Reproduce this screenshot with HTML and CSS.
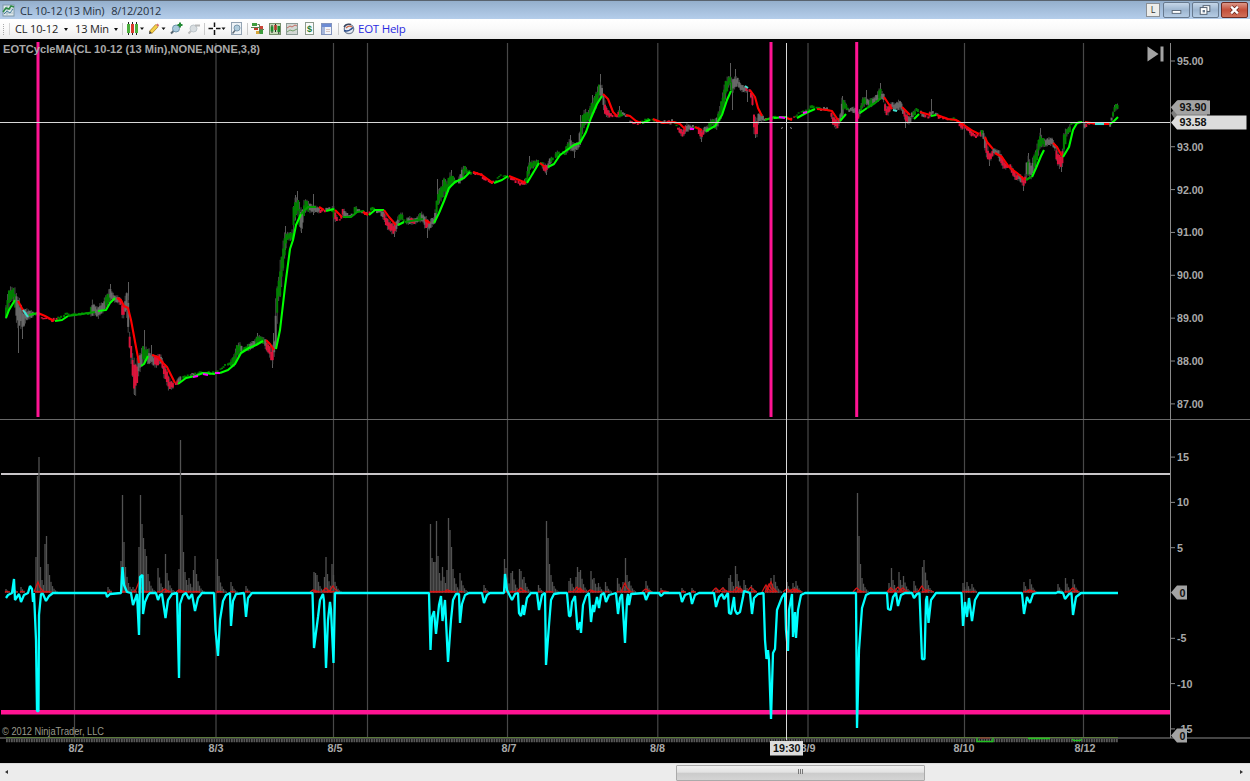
FILE: index.html
```html
<!DOCTYPE html>
<html lang="en">
<head>
    <meta charset="UTF-8">
    <title>CL 10-12 (13 Min) 8/12/2012</title>
    <link rel="stylesheet" href="styles.css">
</head>
<body>

<div class="titlebar">
    <svg class="app-icon" width="13" height="13" viewBox="0 0 13 13">
        <rect x="1" y="1" width="11" height="11" fill="#dfe9ec" stroke="#7f98a8"/>
        <path d="M1 5h11M1 9h11M5 1v11" stroke="#a8bcc4" fill="none"/>
        <path d="M1 8l3-4 3 1 2-3 3 1" stroke="#2d8a43" stroke-width="1.6" fill="none"/>
        <path d="M2 10l3-3 3 2 3-4" stroke="#487f9c" fill="none"/>
    </svg>
    <span class="caption">CL 10-12 (13 Min)</span>
    <span class="caption date">8/12/2012</span>
    <div class="window-buttons">
        <span class="link-btn">L</span>
        <span class="win-btn"><svg width="26" height="14" viewBox="0 0 26 14"><rect x="8.5" y="7.5" width="9" height="3" fill="#fff" stroke="#5a6878"/></svg></span>
        <span class="win-btn"><svg width="26" height="14" viewBox="0 0 26 14"><rect x="10.5" y="2.5" width="7" height="6" fill="#fff" stroke="#4f5c6c"/><rect x="7.5" y="4.5" width="7" height="7" fill="#fff" stroke="#4f5c6c"/><rect x="10" y="7" width="2.5" height="2.5" fill="#66798e"/></svg></span>
        <span class="win-btn close"><svg width="26" height="14" viewBox="0 0 26 14"><path d="M9.5 3.5l7 7M16.5 3.5l-7 7" stroke="#6b2a22" stroke-width="4"/><path d="M9.5 3.5l7 7M16.5 3.5l-7 7" stroke="#fff" stroke-width="2.4"/></svg></span>
    </div>
</div>

<div class="toolbar">
    <span class="grip"></span>
    <span class="sep"></span>
    <span class="tool-text instrument">CL 10-12</span><span class="caret"></span>
    <span class="tool-text interval">13 Min</span><span class="caret"></span>
    <svg class="tools" width="225" height="18" viewBox="120 20 225 18">
        <path d="M122.5 23v12M204.5 23v12M247.5 23v12M338.5 23v12" stroke="#c9c9c9"/>
        <path d="M128.5 22v13M132.5 22v13M136.5 22v13" stroke="#222"/>
        <rect x="127" y="24" width="3" height="9" fill="#4cae3c"/>
        <rect x="131" y="24" width="3" height="9" fill="#d93a2c"/>
        <rect x="135" y="24" width="3" height="9" fill="#4cae3c"/>
        <path d="M140 27.5h4l-2 2.5zM161.5 27.5h4l-2 2.5zM221.5 27.5h4l-2 2.5z" fill="#111"/>
        <path d="M150.5 32.5l6.5-7" stroke="#a87c1c" stroke-width="4"/>
        <path d="M151 32l6.500-7" stroke="#f3d04a" stroke-width="2.6"/>
        <path d="M149 34l.5-3 2.3 2.3z" fill="#333"/>
        <path d="M156.8 24.3l1.7 1.7" stroke="#d46f78" stroke-width="2"/>
        <path d="M171 33.5l4-4" stroke="#55646f" stroke-width="2"/>
        <circle cx="176" cy="28.5" r="3.5" fill="#a9c9dc" stroke="#7194ab"/>
        <path d="M180 22.5v5M177.5 25h5" stroke="#238a35" stroke-width="2"/>
        <path d="M188.5 33.5l4-4" stroke="#bbb" stroke-width="2"/>
        <circle cx="193.5" cy="28.5" r="3.5" fill="#d8dde0" stroke="#bcc5ca"/>
        <path d="M195 25.5h5" stroke="#b9b9b9" stroke-width="2"/>
        <path d="M214.5 22.5v4.5M214.5 30v5M208.5 28.5h4.5M216 28.5h4.5" stroke="#111" stroke-width="1.5"/>
        <rect x="231.5" y="22.5" width="10" height="12" fill="#edf2f6" stroke="#93a3b3"/>
        <circle cx="237" cy="28" r="3" fill="#afcbdc" stroke="#7b98ac"/>
        <path d="M232.5 33.5l2.5-3" stroke="#606d78" stroke-width="1.5"/>
        <rect x="252" y="23" width="5" height="3" fill="#3d9c3d"/>
        <rect x="254" y="28" width="4" height="2" fill="#c0392b"/>
        <rect x="256" y="31" width="5" height="3" fill="#d6a53b"/>
        <rect x="260" y="26" width="3" height="3" fill="#c74436"/>
        <rect x="260" y="30" width="3" height="4" fill="#3d9c3d"/>
        <path d="M251 27.5h8M257.5 24.500h2v9M259 29.5h5" stroke="#5f7d54" fill="none"/>
        <rect x="269.5" y="23.5" width="11" height="11" fill="#c7dab8" stroke="#78906e"/>
        <path d="M272 25v8M275.5 24v8M278.8 26v8" stroke="#222" stroke-width="1"/>
        <path d="M272 26.5v5M278.8 26v6" stroke="#1f8a2b" stroke-width="2.6"/>
        <path d="M275.5 25v5" stroke="#b3362b" stroke-width="2.6"/>
        <rect x="286.5" y="23.5" width="11" height="11" fill="#d3d7d4" stroke="#8c9a96"/>
        <path d="M287 28l3-2 2 1 3-2 2 1" stroke="#c46b62" fill="none"/>
        <path d="M287 32l3-2 3 1 4-2" stroke="#74a06c" fill="none"/>
        <rect x="305.5" y="22.5" width="8" height="12" fill="#fafafa" stroke="#8d9a8d"/>
        <text x="307" y="32" class="dollar">$</text>
        <rect x="321.5" y="23.5" width="10" height="11" fill="#f2f4fa" stroke="#8394bd"/>
        <rect x="322" y="24" width="9" height="3" fill="#6c8bd4"/>
        <rect x="322" y="27" width="3" height="7" fill="#a5b6da"/>
        <path d="M326 29.5h4M326 31.5h4" stroke="#d8c5c0"/>
    </svg>
    <svg class="eot-icon" width="12" height="12" viewBox="0 0 12 12">
        <circle cx="6" cy="6" r="4.700" fill="#e7ecf5" stroke="#7a859a" stroke-width="1.3"/>
        <path d="M1 4q2-4 7-2.500" stroke="#38445c" stroke-width="1.400" fill="none"/>
        <path d="M1 7.5q4 2 9-3" stroke="#2f4f8c" stroke-width="1.4" fill="none"/>
        <path d="M3 5q3-3 6-1" stroke="#d06a48" stroke-width="1.2" fill="none"/>
    </svg>
    <a class="help">EOT Help</a>
</div>

<svg id="chart" class="chart" width="1250" height="724" viewBox="0 39 1250 724"></svg>

<div class="scrollbar">
    <span class="arrow left"></span>
    <div class="track"><div class="thumb"><i></i><i></i><i></i></div></div>
    <span class="arrow right"></span>
</div>

<script src="chart.js"></script>
</body>
</html>
```
FILE: styles.css
```css
body {
    margin: 0;
    width: 1250px;
    height: 781px;
    overflow: hidden;
    background-color: #000;
    font-family: "Open Sans", "Noto Sans", sans-serif;
    display: flex;
    flex-direction: column;
}

.titlebar {
    height: 19px;
    box-sizing: border-box;
    border-top: 1px solid #59636e;
    background: linear-gradient(#94afcc, #a5bfdc 50%, #b4cdea);
    display: flex;
    align-items: center;
    flex-shrink: 0;
}

.app-icon {
    margin: 0 5px 0 2px;
}

.caption {
    font-size: 11px;
    letter-spacing: -0.25px;
    line-height: 17px;
    color: #26323f;
    white-space: pre;
}

.date {
    margin-left: 7px;
}

.window-buttons {
    margin-left: auto;
    display: flex;
    align-items: center;
    gap: 2px;
    padding-right: 2px;
}

.link-btn {
    width: 12px;
    height: 12px;
    border: 1px solid #8a8f94;
    background-color: #ededea;
    font-size: 9px;
    line-height: 12px;
    text-align: center;
    color: #333;
    margin-right: 1px;
}

.win-btn {
    width: 25px;
    height: 14px;
    border: 1px solid #67798e;
    border-radius: 2px;
    background: linear-gradient(#c5d6e8, #9db5cf 50%, #b5cce4);
    display: flex;
    overflow: hidden;
}

.close {
    border-color: #6b2a22;
    background: linear-gradient(#dc9788, #c44f3a 50%, #d0705a);
}

.toolbar {
    height: 20px;
    box-sizing: border-box;
    background: linear-gradient(#fff, #fafafa 45%, #ebebeb);
    display: flex;
    align-items: center;
    flex-shrink: 0;
}

.grip {
    width: 1px;
    height: 11px;
    margin-left: 3px;
    border-left: 1px dotted #aaa;
}

.sep {
    width: 1px;
    height: 12px;
    margin: 0 5px 0 4px;
    background-color: #d5d5d5;
}

.tool-text {
    font-size: 11px;
    letter-spacing: -0.15px;
    line-height: 18px;
    padding-bottom: 1px;
    color: #222;
    white-space: nowrap;
}

.instrument {
    width: 49px;
}

.interval {
    width: 39px;
}

.caret {
    border: 2px solid transparent;
    border-top: 3px solid #111;
    border-bottom: none;
    margin-right: 7px;
}

.interval + .caret {
    margin-right: 2px;
}

.eot-icon {
    margin-left: -2px;
}

.help {
    margin-left: 3px;
    padding-bottom: 2px;
    font-size: 11.5px;
    letter-spacing: -0.25px;
    color: #2a2ae0;
}

.dollar {
    font: bold 9px "Liberation Sans", sans-serif;
    fill: #1f7a2b;
}

.chart {
    display: block;
    flex-shrink: 0;
    background-color: #000;
}

.axis-label {
    font: bold 11.5px "Liberation Sans", Arial, sans-serif;
    fill: #a9a9a9;
}

.tag-label {
    font: bold 11.5px "Liberation Sans", Arial, sans-serif;
    fill: #111;
}

.indicator-label {
    font: bold 11.5px "Liberation Sans", Arial, sans-serif;
    fill: #a9a9a9;
}

.copyright {
    font: 10px "Liberation Sans", Arial, sans-serif;
    fill: #9a9a8c;
}

.scrollbar {
    height: 18px;
    box-sizing: border-box;
    background-color: #ececec;
    border-top: 1px solid #dcdcdc;
    display: flex;
    align-items: center;
    flex-shrink: 0;
}

.track {
    flex: 1;
    padding-left: 661px;
}

.thumb {
    width: 247px;
    height: 14px;
    border: 1px solid #aaa;
    border-radius: 1px;
    background: linear-gradient(#f0f0f0, #e2e2e2 45%, #cbcbcb 50%, #d4d4d4);
    display: flex;
    align-items: center;
    justify-content: center;
    gap: 1px;
}

.thumb i {
    width: 1px;
    height: 5px;
    margin-bottom: 2px;
    background-color: #777;
}

.arrow {
    width: 0;
    margin-bottom: 2px;
    border: 2px solid transparent;
}

.left {
    border-right: 3px solid #333;
    border-left: none;
    margin-left: 5px;
    margin-right: 7px;
}

.right {
    border-left: 3px solid #333;
    border-right: none;
    margin-right: 7px;
}
```
FILE: chart.js
```js
const chart = document.getElementById('chart');

const GREEN = '#008000';
const RED = '#dc143c';
const GRAY = '#696969';
const colors = { g: GREEN, r: RED, d: GRAY };

// price range: x, top, bottom, trend colour
const price = `6 306 318 g,8 293 312 g,10 288 302 g,14 288 299 g,15 290 308 d,17 296 325 d,21 305 326 d,23 312 330 d,25 309 322 d,28 310 319 d,31 311 318 d,34 312 316 g,38 312 315 g,40 317 319 r,50 318 320 r,53 318 323 r,57 317 320 g,60 316 319 g,63 314 318 g,67 312 315 g,70 313 316 g,90 312 315 g,92 301 316 d,95 306 314 d,98 308 318 d,100 304 315 d,103 303 312 d,105 297 308 g,108 293 305 g,110 288 300 d,112 292 300 d,115 296 302 d,118 296 303 r,121 299 305 r,122 304 317 r,124 305 317 d,126 293 308 d,128 292 328 d,129 328 342 r,131 345 360 r,133 358 380 r,134 360 392 r,136 365 392 r,138 358 376 d,141 352 368 d,143 346 363 g,146 348 360 g,149 350 364 d,151 355 362 d,154 356 366 r,157 356 367 r,160 354 362 d,162 357 366 r,164 366 377 r,166 366 380 r,168 375 389 r,170 380 389 r,175 384 388 r,178 378 384 d,181 376 381 g,185 375 379 g,190 374 376 d,195 372 375 g,200 371 374 g,210 371 375 g,215 371 374 g,220 369 371 g,225 364 367 g,230 362 366 g,234 355 366 g,237 345 358 g,240 343 353 d,242 347 352 g,246 346 351 g,250 343 350 d,255 340 346 g,257 336 345 g,260 336 342 g,264 338 344 d,266 340 350 r,269 344 354 r,271 350 360 r,273 345 363 d,275 338 350 d,276 290 348 g,278 285 300 g,280 265 298 g,282 255 280 g,284 235 262 g,287 233 240 g,292 232 240 g,293 215 238 g,294 200 225 g,296 199 215 g,298 200 214 g,300 206 230 d,302 212 230 d,304 202 216 g,306 199 210 g,309 203 212 d,312 205 212 d,315 206 212 d,320 208 213 r,323 209 213 r,326 208 212 d,330 206 209 g,333 207 213 g,334 207 221 r,336 215 221 r,340 219 221 r,343 208 216 d,346 212 218 d,350 215 217 d,353 212 216 g,355 206 214 g,357 207 212 d,360 210 213 d,365 211 215 r,368 212 216 r,370 209 214 g,373 205 210 g,376 209 213 d,380 209 214 d,384 212 220 r,387 218 228 r,390 222 231 r,393 224 234 r,396 222 232 d,399 215 222 g,402 212 219 g,404 220 224 g,407 218 224 d,410 217 224 r,415 219 224 d,418 216 222 g,421 212 221 d,423 214 222 d,425 217 228 r,427 218 228 r,429 222 230 d,432 218 226 d,434 218 224 d,436 205 222 g,438 191 205 g,441 187 200 g,444 178 195 g,447 182 192 g,450 174 188 g,452 174 184 g,454 178 184 g,457 180 184 d,460 176 183 d,462 168 180 g,465 166 173 g,468 170 174 g,472 170 175 d,475 172 175 r,480 172 176 r,485 177 182 r,490 180 184 r,495 181 184 g,500 174 176 g,505 175 177 g,510 176 180 r,513 177 181 r,518 180 185 r,522 182 186 r,526 178 184 g,528 165 181 g,530 162 169 g,533 161 168 g,538 160 165 g,541 161 165 g,543 163 169 r,545 164 173 r,547 165 171 d,550 158 165 g,553 156 160 g,557 151 157 g,560 152 156 g,565 150 155 g,567 144 153 g,570 139 149 d,572 143 151 d,575 143 151 d,578 143 149 d,580 130 145 g,583 113 130 g,585 110 125 g,588 113 122 g,591 104 116 g,594 98 112 g,597 90 105 g,600 82 96 d,602 86 97 d,604 98 112 r,606 106 116 r,608 110 117 r,612 114 118 r,616 115 118 r,619 110 117 g,622 111 116 d,626 114 117 d,628 115 118 d,631 121 124 r,638 122 125 r,642 120 122 g,645 118 121 g,650 118 121 g,655 119 122 r,660 121 124 d,665 120 124 r,670 120 125 d,674 118 122 g,677 126 128 r,680 128 134 r,683 131 137 r,686 124 132 d,690 125 130 d,694 125 129 g,698 127 131 r,700 128 138 r,702 132 138 r,704 127 133 d,708 126 132 g,710 120 128 g,713 119 124 g,716 120 130 d,718 113 126 g,720 107 120 g,723 93 112 g,725 82 100 g,728 77 88 g,730 76 84 g,732 80 93 d,735 77 88 d,738 78 85 d,740 83 90 d,743 86 92 d,746 86 92 r,749 88 92 r,751 92 98 r,753 95 108 r,754 115 132 r,756 120 136 r,757 119 136 r,758 114 124 d,760 112 121 d,765 118 121 r,768 118 120 g,772 117 120 g,776 115 119 g,780 116 118 g,786 116 119 g,790 118 121 r,795 116 118 g,800 111 113 g,805 110 113 g,808 108 112 g,812 104 109 g,815 105 108 g,820 107 111 d,825 106 111 d,828 108 111 g,831 112 116 r,833 115 125 r,835 118 127 r,837 120 129 r,840 117 123 d,842 99 117 g,845 101 108 g,848 108 112 d,852 107 112 d,856 108 114 d,857 113 120 r,859 112 118 d,861 105 112 g,863 97 107 g,866 98 104 d,869 100 106 g,872 98 106 d,875 97 102 d,878 92 102 g,880 87 98 g,882 92 99 d,884 94 102 d,885 103 112 r,887 108 116 r,889 105 113 r,892 102 108 d,895 104 110 d,898 101 110 d,901 101 109 d,903 108 114 r,905 112 120 r,908 115 124 d,910 118 123 d,912 112 118 g,915 110 115 g,917 107 112 g,920 110 115 d,925 114 119 r,928 117 120 r,930 111 117 d,935 111 114 d,938 114 119 r,942 116 119 r,950 118 121 g,955 117 121 g,958 120 123 r,961 123 129 r,965 126 130 r,968 127 131 r,971 130 136 r,975 134 138 r,979 134 138 r,981 130 136 g,983 130 136 d,985 137 150 r,987 145 158 r,990 155 162 r,993 148 155 d,995 149 154 d,998 150 156 d,1000 152 162 r,1003 158 168 r,1006 164 169 r,1010 164 169 r,1014 170 178 r,1016 174 180 r,1019 174 180 d,1022 176 184 r,1024 180 187 r,1026 171 181 d,1027 158 176 g,1029 158 175 d,1031 166 178 d,1033 158 172 g,1036 150 165 g,1038 142 156 g,1040 134 148 g,1043 138 146 g,1045 140 147 d,1048 138 145 d,1052 138 145 d,1055 144 150 r,1057 150 164 r,1060 156 168 r,1063 148 165 g,1064 132 152 g,1067 129 135 g,1070 125 132 g,1072 121 124 g,1076 121 125 g,1080 121 123 g,1083 120 123 d,1085 123 129 r,1088 122 125 r,1095 122 124 g,1100 122 125 r,1105 122 125 r,1110 122 127 d,1112 116 121 g,1115 104 110 g,1118 104 109 g`
    .split(',').map(p => {
        const [x, t, b, c] = p.split(' ');
        return { x: +x, t: +t, b: +b, c: colors[c] };
    });

// long wicks: x, top, bottom
const wicks = [[18.5, 300, 353], [22.5, 320, 339], [110.5, 284, 300], [128.5, 282, 300], [144.5, 330, 350], [151.5, 345, 362], [134.5, 385, 395],
    [257.5, 333, 345], [272.5, 355, 368], [273.5, 333, 350], [285.5, 226, 250], [297.5, 191, 210], [295.5, 195, 220], [301.5, 220, 233], [313.5, 194, 215],
    [394.5, 225, 237], [427.5, 222, 238], [437.5, 179, 195], [451.5, 170, 180], [529.5, 156, 170], [546.5, 165, 175], [570.5, 135, 145],
    [574.5, 145, 158], [580.5, 115, 145], [592.5, 95, 110], [600.5, 74, 90], [619.5, 106, 115], [701.5, 130, 142], [730.5, 63, 90], [735.5, 69, 85],
    [732.5, 85, 110], [747.5, 90, 102], [755.5, 125, 138], [842.5, 96, 110], [866.5, 90, 105], [880.5, 83, 95], [905.5, 115, 128],
    [931.5, 99, 115], [989.5, 155, 166], [1023.5, 180, 191], [1028.5, 153, 170], [1040.5, 128, 140], [1061.5, 160, 172]];

// moving average: colour followed by its points
const average = [
    ['#00ff00', '6,318 9,310 15,300'], ['#ff0000', '18,301 24,312'], ['#40e0d0', '23,310 28,317'], ['#00c800', '29,315 38,313'],
    ['#ff0000', '38,313 45,316 54,321'], ['#00ff00', '55,321 62,320 68,316'], ['#00a000', '68,316 75,315 95,312'], ['#00ff00', '98,311 106,310 110,303 115,298'],
    ['#ff0000', '117,298 121,300 124,306 128,308 131,320 136,347 139,363'], ['#00ff00', '141,366 144,364 148,356'],
    ['#ff0000', '152,355 158,357 162,362 167,367 171,375 175,383'], ['#00ff00', '178,384 186,378 195,376 203,373 215,374'],
    ['#ff00ff', '193,377 198,376'], ['#ff00ff', '203,374 208,375'], ['#ff00ff', '215,373 220,373'],
    ['#00ff00', '220,373 228,370 235,364 241,353 249,348 256,345 263,341'], ['#ff0000', '266,340 270,344 274,350'],
    ['#00ff00', '276,349 280,330 285,287 290,249 293,240 296,225 301,214'], ['#00a000', '301,214 308,207 316,207'],
    ['#ff0000', '319,207 324,210'], ['#00ff00', '326,211 334,209'], ['#ff0000', '335,210 342,217'],
    ['#00a000', '343,217 351,217 357,212 364,211'], ['#ff0000', '363,212 368,215'], ['#00ff00', '369,215 375,210 384,210'],
    ['#ff0000', '384,210 389,217 396,225'], ['#00ff00', '398,225 404,222'], ['#008c00', '405,222 423,219'],
    ['#ff0000', '425,220 430,223'], ['#00ff00', '434,223 439,213 444,201 449,188 455,182 464,178 470,172'],
    ['#ff0000', '473,172 482,175 493,183'], ['#00ff00', '494,183 502,180 508,176'], ['#ff0000', '509,176 519,180 526,183'],
    ['#00ff00', '527,183 533,173 539,163'], ['#ff0000', '540,163 545,167'], ['#00ff00', '548,167 554,164 560,155 567,150 574,145 580,143 586,132 591,118 597,104 602,96'],
    ['#ff0000', '603,94 608,99 613,112 617,116'], ['#008c00', '618,116 623,115'], ['#ff0000', '626,115 630,116 636,121 641,123'],
    ['#00ff00', '642,123 650,120'], ['#ff0000', '653,119 663,123 674,122 680,124 685,129'], ['#ff00ff', '690,129 694,129'],
    ['#ff0000', '695,127 702,130'], ['#00ff00', '706,131 715,126 722,115 727,100 731,91'], ['#40e0d0', '745,86 748,88'],
    ['#ff0000', '750,90 755,97 758,108 762,116'], ['#00c800', '765,120 774,117'], ['#00ff00', '774,118 786,117'], ['#ff00ff', '779,117 785,118'],
    ['#ff0000', '787,118 792,120'], ['#00ff00', '797,118 806,113 815,109'], ['#ff00ff', '803,113 807,112'],
    ['#ff0000', '817,109 827,110 832,111 838,120'], ['#00ff00', '840,121 846,114'],
    ['#00ff00', '860,113 867,108'], ['#00a000', '867,108 875,103 881,98'], ['#ff0000', '884,97 888,103 892,109'], ['#40e0d0', '893,110 897,111'],
    ['#ff0000', '902,107 910,115'], ['#00ff00', '914,119 919,114'], ['#ff0000', '920,112 930,115'], ['#00ff00', '931,116 936,115'],
    ['#ff0000', '937,115 948,119 956,120 964,125 973,131 979,134'], ['#ff0000', '985,137 987,142 993,149'], ['#ff0000', '995,153 1002,157 1009,167 1017,173 1025,180'],
    ['#00a000', '1026,180 1031,177'], ['#00ff00', '1032,177 1036,168 1041,156 1044,150'], ['#ff0000', '1053,143 1057,147 1062,156'],
    ['#00ff00', '1063,157 1069,147 1073,130 1077,123 1082,122'], ['#ff0000', '1085,122 1097,124'], ['#40e0d0', '1095,124 1104,124'],
    ['#ff0000', '1104,124 1109,124'], ['#00ff00', '1110,124 1114,121 1118,117']
];

const cycle = '6,598 8,595 12,593 14,579 15,600 19,594 21,602 24,595 28,593 30,586 32,589 33,602 34,593 36,640 37,711 38.5,711 39,615 41,594 43,594 46,601 49,596 53,593 106,593 107,597 110,594 121,593 122.5,567 124,585 127,592 131,593 133,605 137,594 139,635 140,577 142.5,575 143,614 145,602 148,595 150,593 156,593 158,600 160,595 162,594 165.5,618 168,600 172,594 177,593 179,678 180,604 183,595 186,593 189,599 192,594 195,611 198,598 202,593 214,593 215.5,630 218,656 220,620 223,601 226,595 230,593 231,626 233,601 236,594 244,593 246,617 248,598 252,593 312.5,593 314,648 318,617 320,600 323,594 324,601 326,668 328,620 330,602 331,610 333.5,663 335,593 429,593 430.5,650 432,617 434,611 436,634 439,605 441,596 442.5,621 445,600 448,662 451,620 453,600 456,594 459,594 460,623 462,604 465,595 469,593 482,593 484,603 487,595 490,593 504,593 505,574 507,590 512,600 515,594 518,593 519,613 521,616 523,605 524,615 527,598 531,593 537,593 539,610 542,595 545,593 546,665 549,625 551,600 554,594 560,593 567,593 569,616 570.5,616 572,602 575,596 577.5,630 580,622 581,633 583,605 586,596 589,593 591,622 593,605 594,612 597,597 599,608 601,595 604,593 606,602 609,595 616,593 618,614 620,598 622,594 625,643 627,600 628,594 629,605 631,594 644,593 646,600 649,593 659,593 661,596 664,593 680,593 682,602 685,595 690,593 692,604 695,595 699,593 714,593 716,607 719,597 722,594 724,599 728,593 729,613 731,614 734,597 735,610 737,614 740,612 743,597 744,591 750,593 752,614 754,598 758,594 763.5,593 765,640 766.5,659 768,650 769,660 771,719 773,653 775,649 777,610 782,597 785,593 786,630 788,651 789,610 792,594 793,637 795,612 796,638 798,610 801,595 805,593 856,593 857,728 859,650 862,608 866,595 870,593 887,593 888,609 890.5,610 893,597 896,593 898,606 901,595 905,593 912,593 914,598 917,594 919.5,593 922,659 924.5,659 926,600 927,596 928.5,623 931,600 936,593 961.5,593 963,626 965,602 967,617 969,598 972,621 975,600 979,593 1022,593 1024,614 1027,597 1030,603 1033,594 1037,593 1056,593 1058,592 1063,593 1065,599 1069,594 1071.5,593 1073,615 1076,597 1081,593 1118,593';

// histogram peaks, each one fades out over the following bars
const peaks = [[6, 589], [14, 588], [21, 587], [36, 557], [37.5, 476], [39, 457], [40.5, 567], [42, 580], [45, 544], [46.5, 536], [48, 564], [108, 587], [121, 561], [122.5, 495],
    [124, 542], [125.5, 567], [133, 587], [139, 547], [140.5, 495], [142, 524], [143.5, 538], [145, 549], [146.5, 556], [148, 574], [158, 568],
    [165.5, 554], [167, 573], [179, 569], [180.5, 440], [182, 515], [183.5, 552], [185, 572], [189, 578], [193.5, 570], [195, 556], [196.5, 574],
    [217.5, 559], [219, 576], [231, 582], [246, 586], [314, 572], [315.5, 573], [317, 575], [324.5, 577], [326, 557], [327.5, 574], [332, 564],
    [430.5, 524], [432, 558], [433.5, 562], [435, 562], [436.5, 521], [438, 556], [439.5, 573], [442.5, 567], [447, 570], [448.5, 518], [450, 530],
    [451.5, 547], [453, 569], [460, 573], [484, 585], [504.5, 559], [506, 568], [511, 573], [512.5, 571], [519.5, 569], [521, 571], [524, 577],
    [538.5, 585], [546.5, 521], [548, 538], [549.5, 564], [569, 581], [570.5, 578], [576, 577], [577.5, 567], [579, 572], [580.5, 570], [591, 571],
    [594, 578], [598.5, 583], [605.5, 582], [617.5, 578], [623, 582], [625.5, 558], [627, 575], [629.5, 581], [646, 581], [661, 588], [682, 588],
    [692, 588], [716, 588], [723, 587], [729, 578], [730.5, 575], [735.5, 566], [737, 574], [744, 580], [751.5, 585], [766, 586], [771, 578], [774, 575],
    [787, 582], [793, 583], [796, 581], [857.5, 493], [859, 536], [860.5, 564], [862, 578], [889, 583], [891.5, 568], [893, 580], [899, 572], [903.5, 576],
    [914, 581], [922.5, 567], [924, 560], [963, 583], [967, 582], [972, 584], [1024, 582], [1030, 579], [1058, 584], [1065.5, 578], [1073, 579]];

// peaks of the thin red signal line
const signals = { 38: 11, 139: 11, 165: 4, 180: 3, 333: 7, 326: 5, 314: 3, 448: 3, 521: 5, 577: 6, 580: 5, 591: 3, 625: 10, 646: 4, 663: 2, 716: 5, 723: 5, 737: 6, 740: 5, 751: 6, 766: 8, 769: 9, 771: 11, 787: 4, 793: 4, 796: 4, 857: 5, 891: 5, 898: 6, 903: 5, 922: 7, 928: 3, 1073: 5, 1030: 3 };

let out = '';

function line(x1, y1, x2, y2, stroke, width = 1) {
    out += `<line x1="${x1}" y1="${y1}" x2="${x2}" y2="${y2}" stroke="${stroke}" stroke-width="${width}"/>`;
}

function rect(x, y, w, h, fill) {
    out += `<rect x="${x}" y="${y}" width="${w}" height="${h}" fill="${fill}"/>`;
}

function text(x, y, str, cls, width) {
    const len = width ? ` textLength="${width}" lengthAdjust="spacingAndGlyphs"` : '';
    out += `<text x="${x}" y="${y}" class="${cls}"${len}>${str}</text>`;
}

// session grid
[74.5, 216, 333.5, 367.5, 507.5, 657.8, 808, 964.5, 1083.5].forEach(x => line(x, 43, x, 738, '#484848', 1.2));
line(0, 419.5, 1250, 419.5, '#696969');

// price bars
wicks.forEach(w => line(w[0], w[1], w[0], w[2], '#5c5c5c'));
let n = 0;
for (let x = 6; x <= 1118; x += 1.49) {
    let i = 0;
    while (i < price.length - 2 && price[i + 1].x < x) i++;
    const a = price[i], b = price[i + 1];
    const k = Math.min(1, (x - a.x) / (b.x - a.x));
    const top = a.t + (b.t - a.t) * k;
    const bottom = a.b + (b.b - a.b) * k;
    const span = bottom - top;
    const wave = (Math.sin(n * 2.3) + 1) / 2;
    if (span > 5) {
        line(x, top - span * 0.15 * wave, x, bottom + span * 0.15 * (1 - wave), '#4c4c4c');
        rect(x - 1, top + span * 0.25 * wave, 2, span * 0.75, a.c);
    } else if (n % 5 != 3) {
        rect(x - 1, top + span * 0.4 * wave, 2, Math.max(1.3, span * 0.6), a.c);
    }
    n++;
}
average.forEach(([c, pts]) => {
    out += `<polyline points="${pts}" fill="none" stroke="${c}" stroke-width="2.100" stroke-linejoin="round"/>`;
});

// cursor ghost under the crosshair
out += '<path d="M781 128.5l2-1M790 127.5l2 1" stroke="#999" fill="none"/>';

[38, 771, 856.7].forEach(x => line(x, 42, x, 417, '#ff1493', 3));

// histogram
line(1, 474, 1170, 474, '#c9c6c9', 2);
peaks.forEach(([x, y], i) => {
    let h = 593 - y;
    const next = i + 1 < peaks.length ? peaks[i + 1][0] : 1170;
    for (let px = x; h > 1.5 && px < next - 0.7; px += 1.5) {
        rect(px - 0.65, 593 - h, 1.3, h, '#525252');
        h *= 0.62;
    }
});

// signal line
let red = '';
peaks.forEach(([x]) => {
    red += `M${x - 1} 592.5L${x} 591.3L${x + 4} 592`;
});
for (const x in signals) {
    red += `M${+x - 4} 592L${+x - 1} ${592 - signals[x] * 0.7}L${x} ${593 - signals[x]}L${+x + 2} ${592 - signals[x] * 0.4}L${+x + 6} 592`;
}
out += `<path d="${red}" stroke="#d81414" stroke-width="1.2" fill="none"/>`;

rect(1, 710, 1169, 4.5, '#ff1493');
out += `<polyline points="${cycle}" fill="none" stroke="#00ffff" stroke-width="2.3" stroke-linejoin="bevel"/>`;

// axes
line(1170.5, 43, 1170.5, 738, '#8a8a8a');
line(0, 738, 1250, 738, '#8a8a8a');
line(6, 737.5, 1118, 737.5, '#5c7a3c');
out += '<line x1="6" y1="740.5" x2="1118" y2="740.5" stroke="#585858" stroke-width="3.5" stroke-dasharray="1.8 .7"/>';
out += '<path d="M977 738v3.5h16v-3.5M1072 739l2 1.5h6l2-1.5M1028 738.5h22" stroke="#22c022" stroke-width="1.3" fill="none"/>';
line(980, 738, 990, 738, '#a03030');

[95, 93, 92, 91, 90, 89, 88, 87].forEach(v => {
    const y = 61 + (95 - v) * 42.86;
    line(1170, y, 1175, y, '#8a8a8a');
    text(1177, y + 4, v + '.00', 'axis-label', 26.5);
});
[15, 10, 5, -5, -10, -15].forEach(v => {
    const y = 593 - v * 9.06;
    line(1170, y, 1175, y, '#8a8a8a');
    text(1177, y + 4, v, 'axis-label', Math.abs(v) > 5 ? (v < 0 ? 15.5 : 12) : (v < 0 ? 9.5 : 6));
});

[[76, '8/2'], [216, '8/3'], [335, '8/5'], [509, '8/7'], [657.5, '8/8'], [808, '8/9'], [964, '8/10'], [1085, '8/12']].forEach(([x, s]) => {
    const w = s.length == 3 ? 15 : 21;
    text(x - w / 2, 752, s, 'axis-label', w);
});

// crosshair
line(0, 122.5, 1170, 122.5, '#d8d8d8');
line(786.5, 43, 786.5, 740, '#d8d8d8');
rect(770, 741, 33, 14.5, '#dcdcdc');
text(773, 752, '19:30', 'tag-label', 27.5);

// value tags
out += '<path d="M1171 113l7-8h3v18h-4zM1171 107l7-7h29v19h-29z" fill="#7c7c7c"/>';
out += '<path d="M1171 107.5l6-7h33v14h-33z" fill="#a3a3a3"/>';
text(1179.5, 111, '93.90', 'tag-label', 27);
out += '<path d="M1171 122.5l6-7h69.5v14h-69.5z" fill="#dcdcdc"/>';
text(1179.5, 126, '93.58', 'tag-label', 27);
[592.5, 735.5].forEach(y => {
    out += `<path d="M1171 ${y}l6-7h10v14h-10z" fill="#a3a3a3"/>`;
    text(1179.5, y + 4, '0', 'tag-label', 6);
});

out += '<path d="M1147.5 46.5v15l11-7.5zM1160.5 46.5h3v15h-3z" fill="#a3a3a3"/>';
text(3, 53, 'EOTCycleMA(CL 10-12 (13 Min),NONE,NONE,3,8)', 'indicator-label', 257);
text(2, 735, '© 2012 NinjaTrader, LLC', 'copyright', 102);

chart.innerHTML = out;
```
